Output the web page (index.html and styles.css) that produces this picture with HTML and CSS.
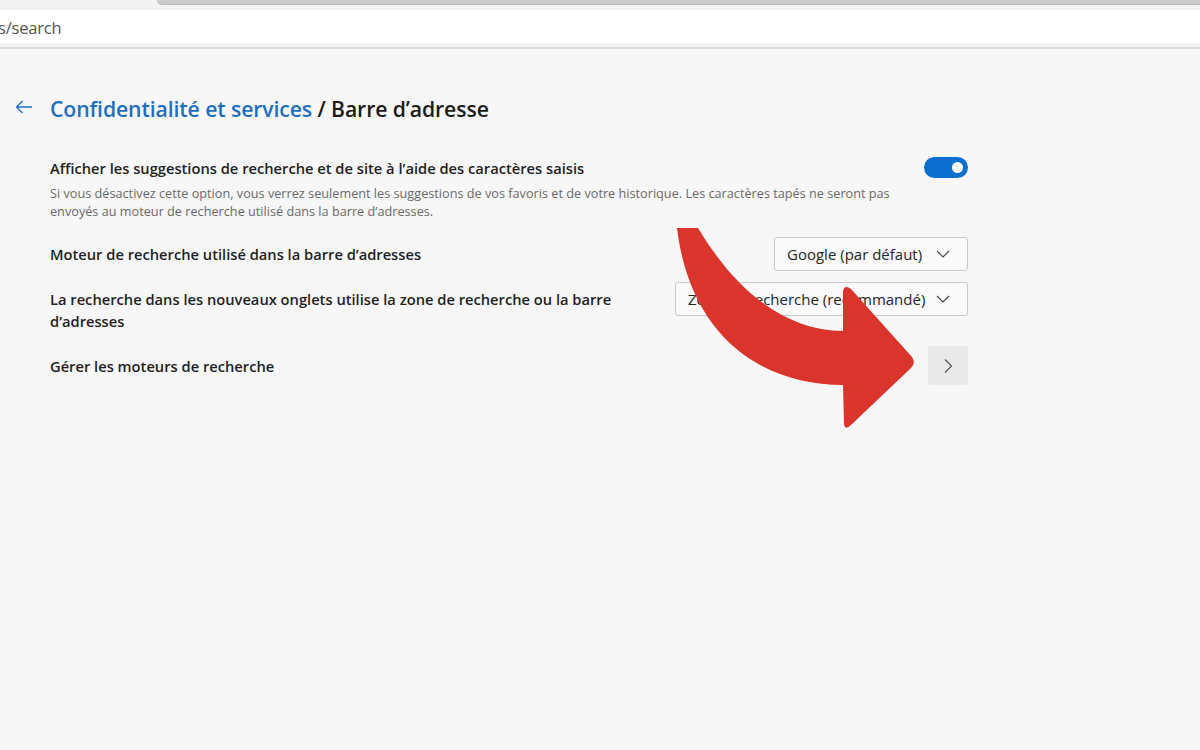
FILE: index.html
```html
<!DOCTYPE html>
<html lang="fr">
<head>
<meta charset="utf-8">
<title>Paramètres - Barre d'adresse</title>
<link rel="stylesheet" href="styles.css">
</head>
<body>
<div class="tabstrip">
  <div class="tab-left"></div>
  <div class="tab-right"></div>
</div>
<div class="toolbar">
  <div class="omnibox"><span class="url">s/search</span></div>
</div>
<main class="page">
  <header class="crumbs">
    <svg class="back" width="18" height="14" viewBox="0 0 18 14" aria-hidden="true">
      <path d="M17 7H1.5M7.5 1L1.5 7l6 6" fill="none" stroke="#1e6fc4" stroke-width="1.3"/>
    </svg>
    <h1 class="title"><span class="link">Confidentialité et services</span> <span class="sep">/</span> Barre d’adresse</h1>
  </header>

  <section class="settings">
    <div class="setting s1">
      <div class="texts">
        <div class="label">Afficher les suggestions de recherche et de site à l’aide des caractères saisis</div>
        <div class="desc">Si vous désactivez cette option, vous verrez seulement les suggestions de vos favoris et de votre historique. Les caractères tapés ne seront pas envoyés au moteur de recherche utilisé dans la barre d’adresses.</div>
      </div>
      <div class="toggle"><span class="knob"></span></div>
    </div>

    <div class="setting s2">
      <div class="label">Moteur de recherche utilisé dans la barre d’adresses</div>
      <div class="select">
        <span>Google (par défaut)</span>
        <svg class="chev" width="14" height="8" viewBox="0 0 14 8"><path d="M1 1l6 6 6-6" fill="none" stroke="#444" stroke-width="1.1"/></svg>
      </div>
    </div>

    <div class="setting s3">
      <div class="label wrap">La recherche dans les nouveaux onglets utilise la zone de recherche ou la barre d’adresses</div>
      <div class="select wide">
        <span>Zone de recherche (recommandé)</span>
        <svg class="chev" width="14" height="8" viewBox="0 0 14 8"><path d="M1 1l6 6 6-6" fill="none" stroke="#444" stroke-width="1.1"/></svg>
      </div>
    </div>

    <div class="setting s4">
      <div class="label">Gérer les moteurs de recherche</div>
      <div class="navbtn">
        <svg width="10" height="16" viewBox="0 0 10 16"><path d="M2 1.5l6.5 6.5-6.5 6.5" fill="none" stroke="#555" stroke-width="1.2"/></svg>
      </div>
    </div>
  </section>
</main>

<svg class="overlay-arrow" width="1200" height="750" viewBox="0 0 1200 750" aria-hidden="true">
  <path d="M677 228 L698 228 C735 290 785 331 843 331 L843 292 Q844 284 851 289 L912 357 Q916 363 911 368 L851 425 Q845 431 844 424 L843 385 C760 385 690 335 677 228 Z" fill="#d9352c"/>
</svg>
</body>
</html>
```

FILE: styles.css
```css
html, body {
  margin: 0;
  padding: 0;
}
body {
  width: 1200px;
  height: 750px;
  overflow: hidden;
  background: #f7f7f7;
  font-family: "Open Sans", "Noto Sans", sans-serif;
  color: #1b1b1b;
  position: relative;
}

.tabstrip {
  display: flex;
  height: 5px;
  background: #f3f3f3;
}
.tab-left {
  width: 157px;
}
.tab-right {
  flex: 1;
  background: #cbcbcb;
  border-bottom: 1px solid #b9b9b9;
  border-bottom-left-radius: 5px;
}

.toolbar {
  background: #f3f3f3;
  padding: 5px 0 4px;
  border-bottom: 2px solid #dcdcdc;
}
.omnibox {
  height: 33px;
  background: #ffffff;
  display: flex;
  align-items: center;
  padding-top: 1px;
  box-sizing: border-box;
}
.url {
  margin-left: -2px;
  font-size: 16.5px;
  color: #555;
  letter-spacing: -0.2px;
}

.page {
  padding: 0 232px 0 15px;
}

.crumbs {
  display: flex;
  align-items: center;
  margin-top: 46px;
  height: 26px;
  gap: 17px;
}
.back {
  flex: none;
  margin-top: -3px;
}
.title {
  margin: 0;
  font-size: 21.2px;
  font-weight: 600;
  color: #1b1b1b;
  letter-spacing: -0.1px;
  white-space: nowrap;
}
.title .link {
  color: #1f6fc0;
}

.settings {
  margin-left: 35px;
  margin-top: 36px;
}
.setting {
  display: flex;
  justify-content: space-between;
}
.label {
  font-size: 14.7px;
  font-weight: 600;
  line-height: 22px;
  color: #1f1f1f;
}
.desc {
  margin-top: 5px;
  font-size: 12.7px;
  line-height: 18px;
  color: #6a6a6a;
  max-width: 850px;
}

.s1 {
  align-items: flex-start;
}
.s1 .texts {
  width: 860px;
}
.toggle {
  flex: none;
  width: 44px;
  height: 21px;
  border-radius: 11px;
  background: #0b6fd0;
  display: flex;
  align-items: center;
  justify-content: flex-end;
  padding-right: 5px;
  box-sizing: border-box;
}
.knob {
  width: 11px;
  height: 11px;
  border-radius: 50%;
  background: #ffffff;
}

.s2 {
  margin-top: 17px;
  align-items: center;
}
.select {
  flex: none;
  box-sizing: border-box;
  width: 194px;
  height: 34px;
  border: 1px solid #c9c9c9;
  border-radius: 3px;
  background: #fafafa;
  display: flex;
  align-items: center;
  justify-content: space-between;
  padding: 0 17px 0 12px;
  font-size: 15px;
  color: #262626;
}
.select.wide {
  width: 293px;
}
.chev {
  flex: none;
}

.s3 {
  margin-top: 11px;
  align-items: flex-start;
}
.s3 .label {
  width: 590px;
  margin-top: 6px;
}

.s4 {
  margin-top: 14px;
  align-items: center;
}
.navbtn {
  flex: none;
  width: 40px;
  height: 39px;
  background: #e9e9e9;
  border-radius: 2px;
  display: flex;
  align-items: center;
  justify-content: center;
}

.overlay-arrow {
  position: absolute;
  left: 0;
  top: 0;
  pointer-events: none;
}
```
